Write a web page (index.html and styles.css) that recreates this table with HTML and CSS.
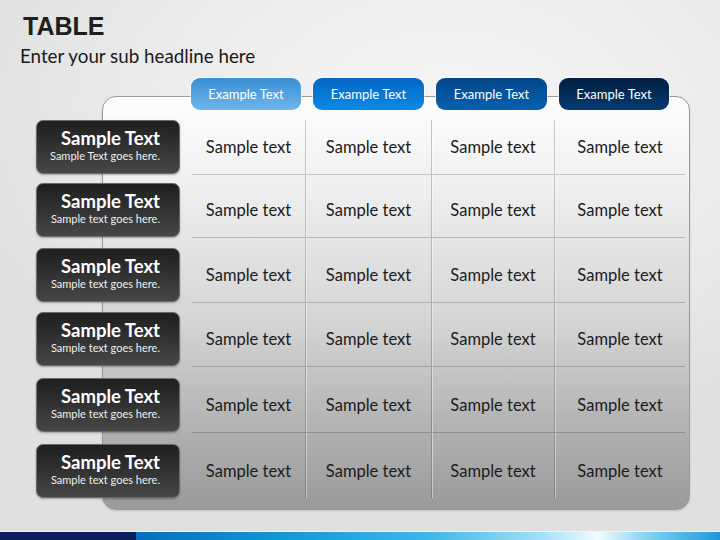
FILE: index.html
```html
<!DOCTYPE html>
<html>
<head>
<meta charset="utf-8">
<link rel="stylesheet" href="styles.css">
</head>
<body>
<div class="page">
  <header class="head">
    <h1 class="title">TABLE</h1>
    <p class="sub">Enter your sub headline here</p>
  </header>
  <div class="tabs">
    <div class="tab t1">Example Text</div>
    <div class="tab t2">Example Text</div>
    <div class="tab t3">Example Text</div>
    <div class="tab t4">Example Text</div>
  </div>
  <div class="panel">
    <div class="row r1">
      <div class="label"><span class="lt">Sample Text</span><span class="ls">Sample Text goes here.</span></div>
      <div class="cell">Sample text</div><div class="cell">Sample text</div><div class="cell">Sample text</div><div class="cell">Sample text</div>
    </div>
    <div class="row r2">
      <div class="label"><span class="lt">Sample Text</span><span class="ls">Sample text goes here.</span></div>
      <div class="cell">Sample text</div><div class="cell">Sample text</div><div class="cell">Sample text</div><div class="cell">Sample text</div>
    </div>
    <div class="row r3">
      <div class="label"><span class="lt">Sample Text</span><span class="ls">Sample text goes here.</span></div>
      <div class="cell">Sample text</div><div class="cell">Sample text</div><div class="cell">Sample text</div><div class="cell">Sample text</div>
    </div>
    <div class="row r4">
      <div class="label"><span class="lt">Sample Text</span><span class="ls">Sample text goes here.</span></div>
      <div class="cell">Sample text</div><div class="cell">Sample text</div><div class="cell">Sample text</div><div class="cell">Sample text</div>
    </div>
    <div class="row r5">
      <div class="label"><span class="lt">Sample Text</span><span class="ls">Sample text goes here.</span></div>
      <div class="cell">Sample text</div><div class="cell">Sample text</div><div class="cell">Sample text</div><div class="cell">Sample text</div>
    </div>
    <div class="row last">
      <div class="label"><span class="lt">Sample Text</span><span class="ls">Sample text goes here.</span></div>
      <div class="cell">Sample text</div><div class="cell">Sample text</div><div class="cell">Sample text</div><div class="cell">Sample text</div>
    </div>
  </div>
  <div class="footer"><div class="fa"></div><div class="fb"></div></div>
</div>
</body>
</html>
```
FILE: styles.css
```css
* { box-sizing: border-box; }
html, body { margin: 0; padding: 0; }
body {
  width: 720px;
  height: 540px;
  overflow: hidden;
  font-family: Lato, "Open Sans", sans-serif;
}
.page {
  width: 720px;
  height: 540px;
  display: flex;
  flex-direction: column;
  background: radial-gradient(ellipse 70% 60% at 62% 22%, #f6f6f6 0%, #ececec 55%, #e0e0e0 100%);
}
.head { padding: 12px 0 0 23px; }
.title {
  margin: 0;
  font-family: "Liberation Sans", Arial, sans-serif;
  font-weight: bold;
  font-size: 25px;
  line-height: 28px;
  color: #1e1e1e;
}
.sub {
  margin: 4px 0 0 -3px;
  font-size: 18.8px;
  line-height: 24px;
  color: #1a1a1a;
}
.tabs {
  display: flex;
  gap: 12px;
  margin: 10px 0 0 191px;
  height: 32px;
  position: relative;
  z-index: 1;
}
.tab {
  width: 111px;
  height: 32px;
  border-radius: 9px;
  color: #fff;
  font-size: 13px;
  line-height: 32px;
  text-align: center;
  box-shadow: 0 0 0 1px rgba(255,255,255,0.6);
}
.t1 { background: linear-gradient(#3b8ed2, #6db6ec); width: 110px; }
.t2 { background: linear-gradient(#0466c4, #0b8ae6); }
.t3 { background: linear-gradient(#03478a, #0661b0); }
.t4 { background: linear-gradient(#011f42, #043a70); width: 110px; }
.panel {
  margin: -14px 0 0 102px;
  width: 588px;
  height: 414px;
  border: 1px solid #9a9a9a;
  border-radius: 14px;
  background: linear-gradient(#fdfdfd 0%, #f2f2f2 18%, #d4d4d4 55%, #b2b2b2 80%, #9a9a9a 100%);
  box-shadow: 0 1px 2px rgba(0,0,0,0.15);
  padding-top: 23px;
}
.row {
  display: grid;
  grid-template-columns: 144px 12px 114px 126px 123px 130px;
  height: 65px;
  margin-left: -67px;
}
.r1 { height: 63px; }
.r2 { height: 65px; }
.r3 { height: 64px; }
.r4 { height: 66px; }
.r5 { height: 66px; }
.row.last { height: 54px; }
.label {
  grid-column: 1;
  height: 54px;
  border-radius: 7px;
  border: 1px solid #6a6a6a;
  background: linear-gradient(#1f1f1f 0%, #303030 45%, #474747 100%);
  box-shadow: 0 1px 2px rgba(0,0,0,0.3);
  display: flex;
  flex-direction: column;
  justify-content: center;
  align-items: flex-end;
  padding: 0 19px 4px 0;
  color: #fff;
}
.lt { font-weight: bold; font-size: 18.5px; line-height: 21px; }
.ls { font-size: 11px; line-height: 14px; color: #f0f0f0; }
.cell {
  font-size: 16.5px;
  line-height: 54px;
  height: 100%;
  text-align: center;
  color: #1c1c1c;
  border-right: 1px solid rgba(0,0,0,0.2);
  box-shadow: 1px 0 0 rgba(255,255,255,0.45);
  background: linear-gradient(rgba(0,0,0,0.2), rgba(0,0,0,0.2)) 0 54px / 100% 1px no-repeat;
}
.cell:nth-child(2) { grid-column: 3; }
.cell:last-child { border-right: none; box-shadow: none; }
.row.last .cell { background: none; }
.footer {
  margin-top: auto;
  height: 9px;
  display: flex;
  border-top: 1px solid rgba(255,255,255,0.7);
}
.fa { width: 136px; background: #0b1f5e; }
.fb {
  flex: 1;
  background: linear-gradient(90deg, #086cbf 0%, #1596d8 25%, #3fb6ea 50%, #a6e2f7 70%, #f2fbff 79%, #7fd0f2 88%, #1f97dc 100%);
}
```
